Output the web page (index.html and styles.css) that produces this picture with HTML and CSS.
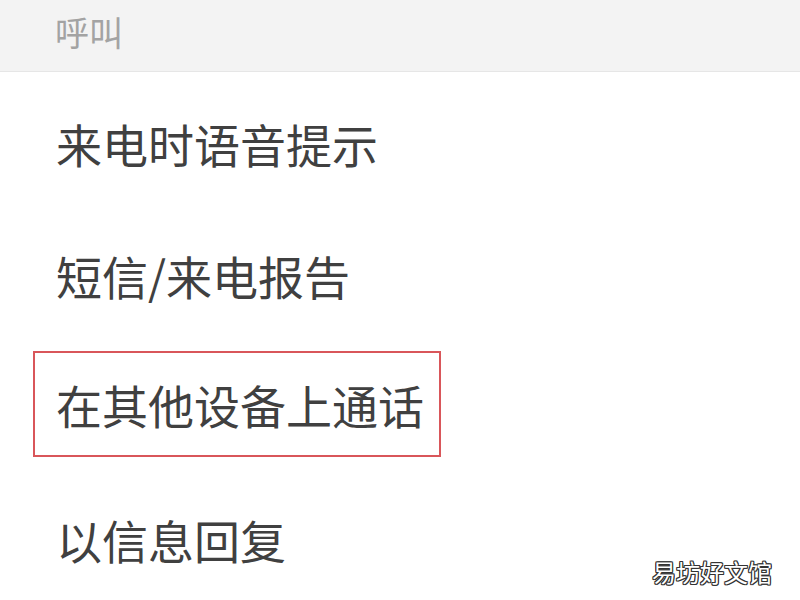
FILE: index.html
```html
<!DOCTYPE html>
<html>
<head>
<meta charset="utf-8">
<link rel="stylesheet" href="styles.css">
</head>
<body>
<div class="page">
  <div class="header"><span class="header-label">呼叫</span></div>
  <div class="list">
    <div class="row"><span class="label">来电时语音提示</span></div>
    <div class="row"><span class="label">短信/来电报告</span></div>
    <div class="row row-marked"><span class="label marked">在其他设备上通话</span></div>
    <div class="row"><span class="label">以信息回复</span></div>
  </div>
  <div class="watermark">易坊好文馆</div>
</div>
</body>
</html>
```
FILE: styles.css
```css
html, body {
  margin: 0;
  padding: 0;
}
body {
  width: 800px;
  height: 600px;
  overflow: hidden;
  background: #ffffff;
  font-family: "Noto Sans CJK SC", "Noto Sans", sans-serif;
}
.page {
  position: relative;
  width: 800px;
  height: 600px;
}
.header {
  height: 71px;
  background: #f3f3f3;
  border-bottom: 1px solid #e6e6e6;
  display: flex;
  align-items: center;
  padding-left: 55px;
}
.header-label {
  font-size: 34px;
  color: #a3a3a3;
  line-height: 1;
  margin-top: -8px;
}
.list {
  padding-top: 5px;
  display: flex;
  flex-direction: column;
}
.row {
  height: 132px;
  display: flex;
  align-items: center;
  padding-left: 56px;
}
.label {
  font-size: 46px;
  color: #404040;
  line-height: 1;
}
.row-marked {
  padding-left: 33px;
}
.marked {
  box-sizing: border-box;
  height: 106px;
  width: 408px;
  border: 2px solid #d9565a;
  display: flex;
  align-items: center;
  padding-left: 21px;
  margin-top: -6px;
}
.watermark {
  position: absolute;
  right: 28px;
  bottom: 16px;
  font-size: 24px;
  line-height: 1;
  color: #ffffff;
  text-shadow: -1px -1px 0 #333, 1px -1px 0 #333, -1px 1px 0 #333, 1px 1px 0 #333, 0 1px 0 #333, 0 -1px 0 #333, 1px 0 0 #333, -1px 0 0 #333;
}
```
